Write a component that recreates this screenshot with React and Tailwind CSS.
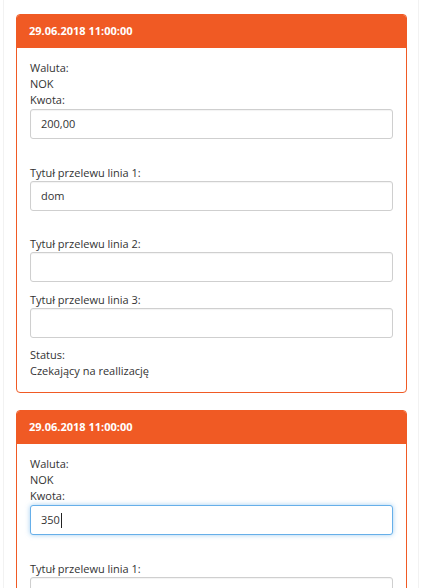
import React from "react";

const font = { fontFamily: '"Open Sans", "Liberation Sans", sans-serif' };

function Field({ value, focused }) {
  return (
    <div
      className={
        "h-[30px] rounded-[3px] border bg-white pl-[10px] flex items-center text-[11px] text-[#333] " +
        (focused
          ? "border-[#66afe9] shadow-[0_0_5px_rgba(102,175,233,0.6)]"
          : "border-[#cfcfcf] shadow-[inset_0_1px_1px_rgba(0,0,0,0.05)]")
      }
    >
      <span>{value}</span>
      {focused && <span className="ml-[1px] inline-block h-[15px] w-[1px] bg-[#222]" />}
    </div>
  );
}

function Card({ kwota, focused }) {
  return (
    <div className="rounded-[4px] border border-[#f05a24] bg-white">
      <div className="h-[33px] rounded-t-[3px] bg-[#f05a24] pl-[12px] flex items-center text-[11px] font-bold text-white">
        29.06.2018 11:00:00
      </div>
      <div className="px-[13px] pt-[12px] pb-[13px] text-[11px] leading-[16px] text-[#333]">
        <div>Waluta:</div>
        <div>NOK</div>
        <div className="mb-[1px]">Kwota:</div>
        <Field value={kwota} focused={focused} />
        <div className="mt-[26px]">Tytuł przelewu linia 1:</div>
        <Field value="dom" />
        <div className="mt-[25px]">Tytuł przelewu linia 2:</div>
        <Field value="" />
        <div className="mt-[10px]">Tytuł przelewu linia 3:</div>
        <Field value="" />
        <div className="mt-[9px]">Status:</div>
        <div>Czekający na reallizację</div>
      </div>
    </div>
  );
}

export default function App() {
  return (
    <div className="min-h-[588px] w-[424px] bg-white overflow-hidden" style={font}>
      <div className="ml-[3px] w-[416px] min-h-[588px] border-x border-[#f2f2f2] pl-[12px] pr-[11px] pt-[14px] flex flex-col gap-[17px]">
        <Card kwota="200,00" />
        <Card kwota="350" focused />
      </div>
    </div>
  );
}
